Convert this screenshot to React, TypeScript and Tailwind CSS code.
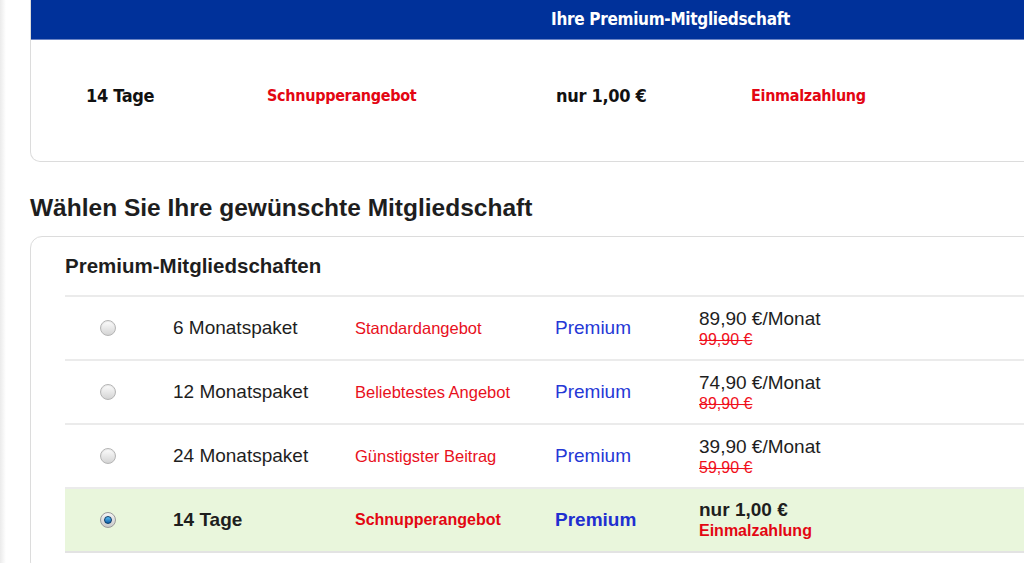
const packages = [
  { term: "6 Monatspaket", note: "Standardangebot", price: "89,90 €/Monat", old: "99,90 €" },
  { term: "12 Monatspaket", note: "Beliebtestes Angebot", price: "74,90 €/Monat", old: "89,90 €" },
  { term: "24 Monatspaket", note: "Günstigster Beitrag", price: "39,90 €/Monat", old: "59,90 €" },
];

function Radio({ checked }: { checked?: boolean }) {
  if (checked) {
    return (
      <span className="w-[16px] h-[16px] rounded-full border border-[#9a9a9a] bg-gradient-to-b from-[#f4f4f4] to-[#c9c9c9] flex items-center justify-center">
        <span className="w-[8px] h-[8px] rounded-full bg-gradient-to-b from-[#5cc0f5] to-[#0b5fa8] border border-[#0a3a66]" />
      </span>
    );
  }
  return (
    <span className="w-[16px] h-[16px] rounded-full border border-[#b5b5b5] bg-gradient-to-b from-[#fdfdfd] to-[#d4d4d4] shadow-[inset_0_1px_1px_rgba(0,0,0,0.08)]" />
  );
}

export default function App() {
  return (
    <div className="w-[1024px] h-[563px] overflow-hidden bg-white flex font-['Liberation_Sans',Arial,sans-serif]">
      <div className="w-[6px] shrink-0 bg-gradient-to-r from-[#ebebeb] to-white" />
      <div className="pl-[24px] w-[1080px] shrink-0">
        {/* current membership */}
        <div className="border border-[#dcdcdc] border-t-0 rounded-b-[10px] overflow-hidden">
          <div className="h-[40px] bg-[#00319a] border-b border-[#6c84c4] flex items-center pl-[520px] font-['DejaVu_Sans_Condensed',sans-serif] font-bold text-[17px] text-white tracking-[-0.3px]">
            Ihre Premium-Mitgliedschaft
          </div>
          <div className="h-[121px] flex items-center pb-[10px] pl-[55px] font-['DejaVu_Sans_Condensed',sans-serif] font-bold text-[16px] tracking-[-0.3px]">
            <span className="w-[181px] text-[18px] text-[#111]">14 Tage</span>
            <span className="w-[289px] text-[#e30613]">Schnupperangebot</span>
            <span className="w-[195px] text-[18px] text-[#111]">nur 1,00 €</span>
            <span className="text-[#e30613]">Einmalzahlung</span>
          </div>
        </div>

        <h2 className="mt-[32px] text-[24.5px] font-bold text-[#1e1e1e] leading-[28px]">
          Wählen Sie Ihre gewünschte Mitgliedschaft
        </h2>

        <div className="mt-[14px] border border-[#dcdcdc] rounded-[12px] pl-[34px] pt-[17px]">
          <div className="text-[20.5px] font-bold text-[#1e1e1e] leading-[24px] h-[41px]">
            Premium-Mitgliedschaften
          </div>
          <div className="border-t-2 border-[#ebebeb]">
            {packages.map((p) => (
              <div
                key={p.term}
                className="h-[64px] grid grid-cols-[108px_182px_200px_144px_1fr] items-center border-b-2 border-[#ebebeb]"
              >
                <div className="pl-[35px] flex">
                  <Radio />
                </div>
                <span className="text-[19px] text-[#1e1e1e]">{p.term}</span>
                <span className="text-[16.5px] text-[#e8101c]">{p.note}</span>
                <span className="text-[19px] text-[#2638d6]">Premium</span>
                <div className="flex flex-col leading-[21px] pt-[1px]">
                  <span className="text-[19px] text-[#1e1e1e]">{p.price}</span>
                  <span className="text-[16px] text-[#f0101c] line-through">{p.old}</span>
                </div>
              </div>
            ))}
            <div className="h-[64px] grid grid-cols-[108px_182px_200px_144px_1fr] items-center border-b-2 border-[#e3e3e3] bg-[#e9f6dc] font-bold">
              <div className="pl-[35px] flex">
                <Radio checked />
              </div>
              <span className="text-[19px] text-[#1e1e1e]">14 Tage</span>
              <span className="text-[16px] text-[#e30613]">Schnupperangebot</span>
              <span className="text-[19px] text-[#1f2fd0]">Premium</span>
              <div className="flex flex-col leading-[21px]">
                <span className="text-[19px] text-[#1e1e1e]">nur 1,00 €</span>
                <span className="text-[16px] text-[#e30613]">Einmalzahlung</span>
              </div>
            </div>
          </div>
          <div className="h-[20px]" />
        </div>
      </div>
    </div>
  );
}
